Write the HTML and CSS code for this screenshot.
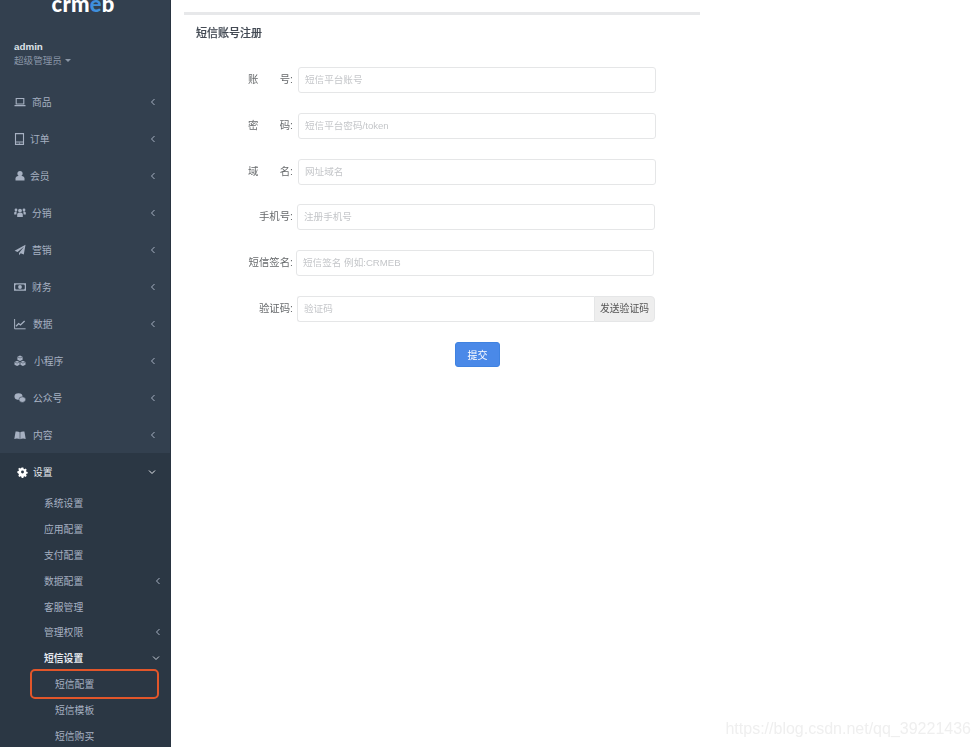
FILE: index.html
```html
<!DOCTYPE html>
<html lang="zh">
<head>
<meta charset="utf-8">
<title>短信账号注册</title>
<link rel="stylesheet" href="styles.css">
</head>
<body>
<div class="page">
  <aside class="sidebar">
    <div class="logo"><span>crm</span><span class="logo-e">e</span><span>b</span></div>
    <div class="profile">
      <div class="name">admin</div>
      <div class="role">超级管理员 <i class="caret"></i></div>
    </div>
    <nav class="menu">
      <a class="item"><svg class="ico" viewBox="0 0 12 12"><path d="M2.200 2.500h7.600v5.500H2.200zM.5 9.600h11" fill="none" stroke="currentColor" stroke-width="1.100"/></svg><span class="t g1">商品</span><svg class="chev" viewBox="0 0 6 8"><path d="M4.500 1 1.500 4l3 3" /></svg></a>
      <a class="item"><svg class="ico" viewBox="0 0 12 12"><path d="M1.500.6h8v10.800h-8zM1.500 9h8" fill="none" stroke="currentColor" stroke-width="1.100"/><circle cx="5.500" cy="10.100" r=".6" fill="currentColor"/></svg><span class="t g2">订单</span><svg class="chev" viewBox="0 0 6 8"><path d="M4.500 1 1.500 4l3 3" /></svg></a>
      <a class="item"><svg class="ico" viewBox="0 0 12 12"><circle cx="6" cy="3.600" r="2.600" fill="currentColor"/><path d="M1.500 10.600V8.500c0-1.600 1.300-2.500 2.600-2.500h3.800c1.300 0 2.600.9 2.600 2.500v2.100z" fill="currentColor"/></svg><span class="t g3">会员</span><svg class="chev" viewBox="0 0 6 8"><path d="M4.500 1 1.500 4l3 3" /></svg></a>
      <a class="item"><svg class="ico" viewBox="0 0 12 12"><circle cx="6" cy="3.600" r="1.900" fill="currentColor"/><circle cx="2" cy="3" r="1.400" fill="currentColor"/><circle cx="10" cy="3" r="1.400" fill="currentColor"/><path d="M3.200 10V7.500C3.200 6.300 4 5.800 5 5.800h2c1 0 1.800.5 1.800 1.700V10zM.2 7.600V6c0-1 .7-1.500 1.500-1.500h1L2.400 7.600zM11.800 7.600V6c0-1-.7-1.500-1.500-1.500h-1l.3 3.100z" fill="currentColor"/></svg><span class="t g1">分销</span><svg class="chev" viewBox="0 0 6 8"><path d="M4.500 1 1.500 4l3 3" /></svg></a>
      <a class="item"><svg class="ico" viewBox="0 0 12 12"><path d="M11.500.8 9.800 10.500 6.700 9.200 5 11.200V9l5-6.300L3.600 8 .6 6.700z" fill="currentColor"/></svg><span class="t g1">营销</span><svg class="chev" viewBox="0 0 6 8"><path d="M4.500 1 1.500 4l3 3" /></svg></a>
      <a class="item"><svg class="ico" viewBox="0 0 12 12"><path d="M.6 2.800h10.800v6.400H.6z" fill="none" stroke="currentColor" stroke-width="1.200"/><circle cx="6" cy="6" r="1.900" fill="currentColor"/><path d="M1 3.200h1.400L1 4.600zM11 3.200H9.600L11 4.600zM1 8.800h1.400L1 7.400zM11 8.800H9.600L11 7.400z" fill="currentColor"/></svg><span class="t g1">财务</span><svg class="chev" viewBox="0 0 6 8"><path d="M4.500 1 1.500 4l3 3" /></svg></a>
      <a class="item"><svg class="ico" viewBox="0 0 12 12"><path d="M.6 1v9.800h11" fill="none" stroke="currentColor" stroke-width="1"/><path d="M2 8.300 4.700 5.600 6.500 7 10.600 3" fill="none" stroke="currentColor" stroke-width="1.300"/></svg><span class="t g4">数据</span><svg class="chev" viewBox="0 0 6 8"><path d="M4.500 1 1.500 4l3 3" /></svg></a>
      <a class="item"><svg class="ico" viewBox="0 0 12 12"><path d="M6 .6 8.600 1.800V4.800L6 6 3.400 4.800V1.800zM3.100 5.800 5.600 7V9.800L3.100 11 .5 9.800V7zM8.900 5.800 11.500 7V9.800L8.900 11 6.400 9.800V7z" fill="currentColor"/><path d="M3.400 1.900 6 3l2.600-1.100M.5 7l2.600 1.100L5.600 7M6.400 7l2.500 1.100L11.500 7" fill="none" stroke="#33404f" stroke-width=".5"/></svg><span class="t g5">小程序</span><svg class="chev" viewBox="0 0 6 8"><path d="M4.500 1 1.500 4l3 3" /></svg></a>
      <a class="item"><svg class="ico" viewBox="0 0 12 12"><ellipse cx="4.500" cy="4.600" rx="4" ry="3.300" fill="currentColor"/><ellipse cx="8.300" cy="7.600" rx="3.400" ry="2.800" fill="currentColor" stroke="#33404f" stroke-width=".6"/></svg><span class="t g4">公众号</span><svg class="chev" viewBox="0 0 6 8"><path d="M4.500 1 1.500 4l3 3" /></svg></a>
      <a class="item"><svg class="ico" viewBox="0 0 12 12"><path d="M.3 10 1.600 2.600C3 2.200 4.700 2.400 6 3.400c1.300-1 3-1.200 4.400-.8L11.700 10C10 9.300 7.800 9.300 6 10.300 4.200 9.300 2 9.300.3 10z" fill="currentColor"/><path d="M6 3.400v6.900" stroke="#33404f" stroke-width=".6"/></svg><span class="t g4">内容</span><svg class="chev" viewBox="0 0 6 8"><path d="M4.500 1 1.500 4l3 3" /></svg></a>
      <div class="open">
        <a class="item active"><svg class="ico gear" viewBox="-.5 0 13 12"><path fill-rule="evenodd" fill="currentColor" d="M5 .8h2l.3 1.500 1 .4 1.300-.8 1.400 1.400-.8 1.300.4 1 1.500.3v2l-1.500.3-.4 1 .8 1.300-1.400 1.400-1.300-.8-1 .4-.3 1.500H5l-.3-1.500-1-.4-1.300.8-1.400-1.400.8-1.300-.4-1L-.1 7V5l1.500-.3.4-1-.8-1.300L2 1l1.300.8 1-.4zM6 4.300a1.700 1.700 0 1 0 0 3.400 1.700 1.700 0 0 0 0-3.400z"/></svg><span class="t g6">设置</span><svg class="chev down" viewBox="0 0 8 6"><path d="M1 1.500l3 3 3-3" /></svg></a>
        <a class="sub">系统设置</a>
        <a class="sub">应用配置</a>
        <a class="sub">支付配置</a>
        <a class="sub">数据配置<svg class="chev" viewBox="0 0 6 8"><path d="M4.500 1 1.500 4l3 3" /></svg></a>
        <a class="sub">客服管理</a>
        <a class="sub">管理权限<svg class="chev" viewBox="0 0 6 8"><path d="M4.500 1 1.500 4l3 3" /></svg></a>
        <a class="sub current">短信设置<svg class="chev down" viewBox="0 0 8 6"><path d="M1 1.500l3 3 3-3" /></svg></a>
        <a class="leaf marked">短信配置</a>
        <a class="leaf">短信模板</a>
        <a class="leaf">短信购买</a>
      </div>
    </nav>
  </aside>
  <main class="main">
    <div class="panel">
      <h1 class="title">短信账号注册</h1>
      <form class="form">
        <div class="row">
          <label class="label wide"><span>账</span><span>号:</span></label>
          <span class="field">短信平台账号</span>
        </div>
        <div class="row">
          <label class="label wide"><span>密</span><span>码:</span></label>
          <span class="field">短信平台密码/token</span>
        </div>
        <div class="row">
          <label class="label wide"><span>域</span><span>名:</span></label>
          <span class="field">网址域名</span>
        </div>
        <div class="row shift1">
          <label class="label">手机号:</label>
          <span class="field">注册手机号</span>
        </div>
        <div class="row shift2">
          <label class="label">短信签名:</label>
          <span class="field">短信签名 例如:CRMEB</span>
        </div>
        <div class="row shift1">
          <label class="label">验证码:</label>
          <span class="group"><span class="field joined">验证码</span><span class="addon">发送验证码</span></span>
        </div>
        <div class="actions"><button class="submit" type="button">提交</button></div>
      </form>
    </div>
  </main>
  <div class="watermark">https://blog.csdn.net/qq_39221436</div>
</div>
</body>
</html>
```
FILE: styles.css
```css
* { box-sizing: border-box; }
html, body { margin: 0; height: 100%; }
body {
  background: #fff;
  font-family: "Liberation Sans", "Noto Sans CJK SC", sans-serif;
  overflow: hidden;
}
.page { display: flex; height: 747px; position: relative; overflow: hidden; filter: blur(0.35px); }

/* sidebar */
.sidebar {
  width: 171px;
  flex: none;
  height: 747px;
  overflow: hidden;
  background: #33404f;
  border-right: 1px solid #2a3542;
  color: #a7b1c2;
}
.logo {
  height: 12px;
  display: flex;
  align-items: flex-end;
  justify-content: center;
  padding-right: 4px;
  font: 900 22px/1 "Lato", sans-serif;
  letter-spacing: 0.200px;
  color: #fff;
  overflow: hidden;
}
.logo span { display: block; flex: none; margin-bottom: -3px; }
.logo-e { color: #3f8fdc; }
.profile { padding: 29px 0 0 14px; height: 71px; }
.name { font-size: 9.800px; line-height: 12px; font-weight: 700; color: #dfe3e8; height: 12px; }
.role { font-size: 9.600px; line-height: 15px; color: #8b97a8; display: flex; align-items: center; gap: 3px; }
.caret { width: 0; height: 0; border: 3px solid transparent; border-top-color: #8b97a8; border-bottom: 0; }
.menu { display: block; }
.item {
  display: flex;
  align-items: center;
  height: 37px;
  padding: 0 14px 0 14px;
  font-size: 9.800px;
  color: #a7b1c2;
}
.ico { width: 12px; height: 12px; flex: none; color: #a7b1c2; }
.t { flex: 1; }
.g1 { margin-left: 6px; }
.g2 { margin-left: 4px; }
.g3 { margin-left: 4px; }
.g4 { margin-left: 7px; }
.g5 { margin-left: 8px; }
.g6 { margin-left: 5px; }
.chev { width: 6px; height: 8px; flex: none; }
.chev path { fill: none; stroke: currentColor; stroke-width: 1; }
.chev.down { width: 8px; height: 6px; }
.open { background: #2b3744; padding-bottom: 4px; }
.active { color: #e6e9ee; padding-left: 17px; margin-bottom: 0.600px; }
.active .ico { color: #fff; width: 11px; }
.sub, .leaf {
  display: flex;
  align-items: center;
  justify-content: space-between;
  height: 25.800px;
  font-size: 9.800px;
  color: #a7b1c2;
}
.sub { padding: 0 9px 0 44px; }
.leaf { padding-left: 55px; }
.current { color: #e6e9ee; font-weight: 700; }
.current .chev { color: #c8ced8; margin-right: 1px; }
.marked { position: relative; }
.marked::after {
  content: "";
  position: absolute;
  box-sizing: border-box;
  left: 30px;
  top: -2px;
  width: 129px;
  height: 30px;
  border: 2px solid #e2562a;
  border-radius: 5px;
}

/* main */
.main { flex: 1; min-width: 0; padding: 12px 0 0 13px; }
.panel { width: 516px; border-top: 3px solid #e7e8ea; }
.title {
  margin: 0;
  padding: 11px 0 0 12px;
  height: 52px;
  font-size: 11px;
  line-height: 14px;
  font-weight: 500;
  color: #444b55;
  -webkit-text-stroke: 0.200px #444b55;
}
.form { display: block; }
.row { display: flex; align-items: center; height: 26px; margin-bottom: 19.800px; padding-left: 64px; width: 472px; }
.label {
  width: 45px;
  flex: none;
  margin-right: 5px;
  padding-bottom: 3px;
  font-size: 10.400px;
  color: #676a6c;
  text-align: right;
  white-space: nowrap;
}
.wide { display: flex; justify-content: space-between; }
.field {
  flex: 1;
  min-width: 0;
  height: 26px;
  border: 1px solid #e5e6e7;
  border-radius: 3px;
  background: #fff;
  padding-left: 6px;
  font-size: 9.600px;
  line-height: 24px;
  color: #c4c6c9;
  white-space: nowrap;
}
.shift1 .label { margin-right: 4px; }
.shift1 { padding-right: 1px; }
.shift2 .label { margin-right: 3px; }
.shift2 { padding-right: 2px; }
.group { flex: 1; display: flex; height: 26px; }
.joined { border-radius: 3px 0 0 3px; border-right: 0; }
.addon {
  width: 61px;
  flex: none;
  background: #eeeeee;
  border: 1px solid #e5e6e7;
  border-radius: 0 4px 4px 0;
  font-size: 9.800px;
  line-height: 24px;
  text-align: center;
  color: #555;
}
.actions { padding: 0 0 0 271px; }
.submit {
  display: block;
  width: 45px;
  height: 25px;
  padding: 0;
  border: 1px solid #3f82e0;
  border-radius: 3px;
  background: #4a89e8;
  color: #fff;
  font: 10px "Liberation Sans", "Noto Sans CJK SC", sans-serif;
}
.watermark {
  position: absolute;
  right: 9px;
  top: 720px;
  font-size: 16px;
  line-height: 18px;
  color: #efefef;
  white-space: nowrap;
}
```
